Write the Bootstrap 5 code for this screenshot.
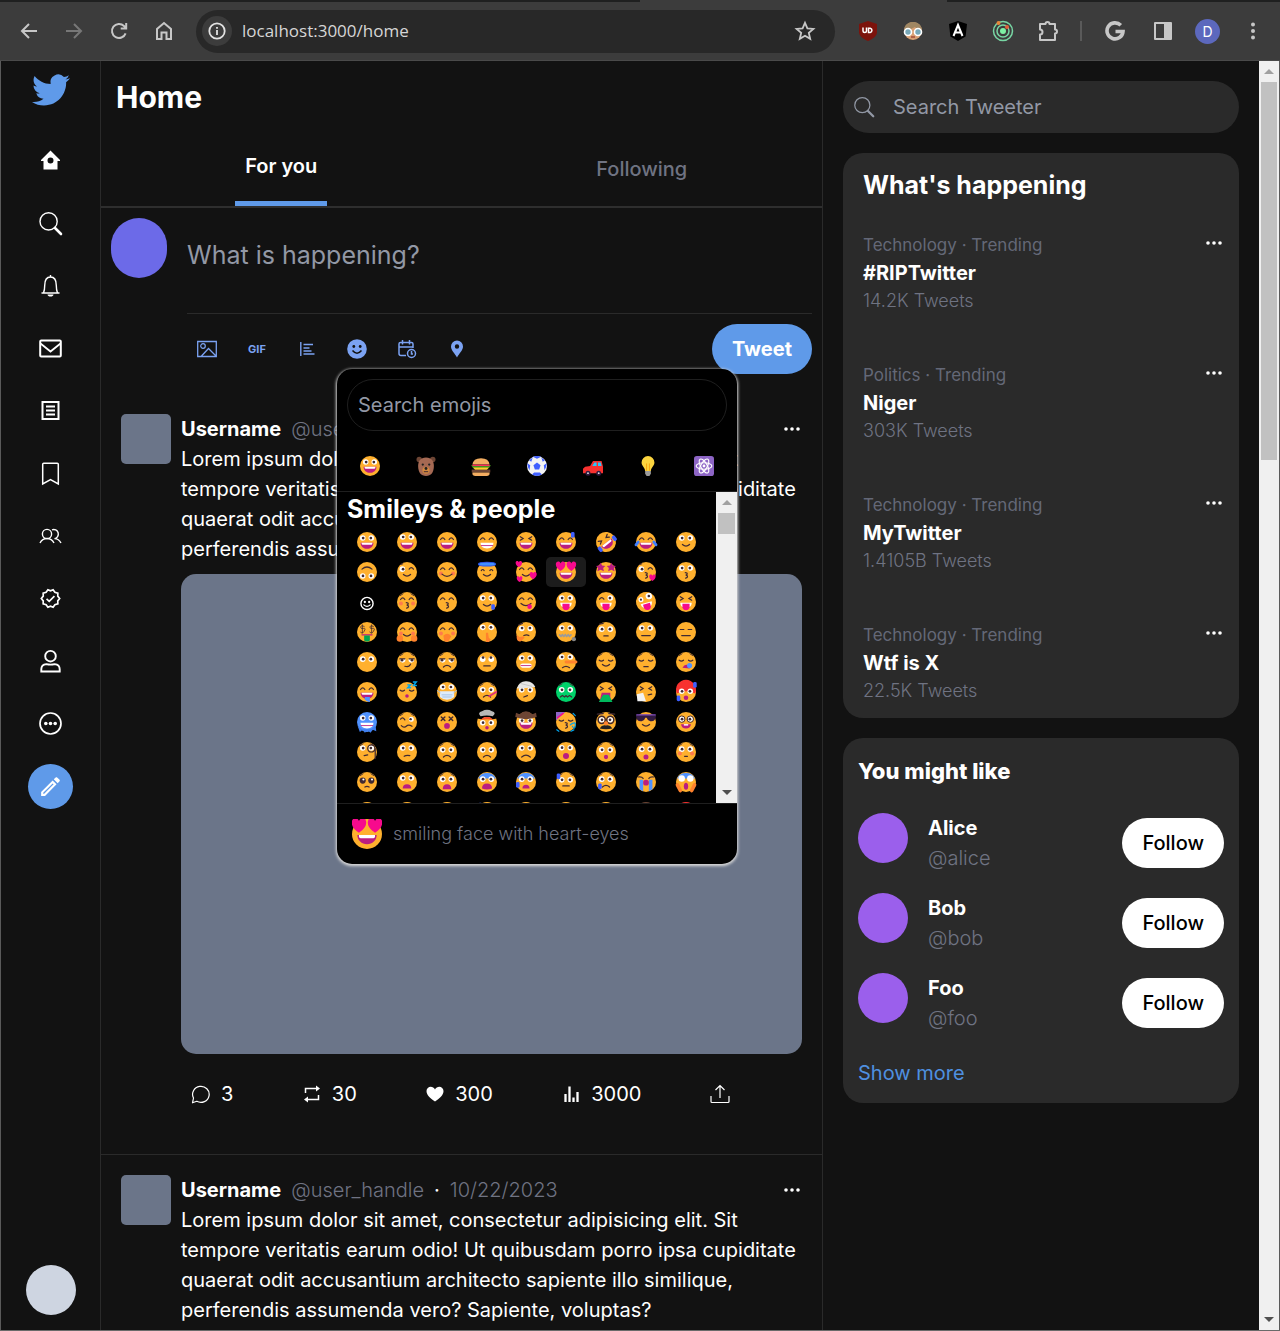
<!DOCTYPE html>
<html lang="en" data-bs-theme="dark">
<head>
<meta charset="utf-8">
<meta name="viewport" content="width=device-width, initial-scale=1">
<title>Home / Tweeter</title>
<link href="https://cdn.jsdelivr.net/npm/bootstrap@5.3.0/dist/css/bootstrap.min.css" rel="stylesheet">
<style>
  :root { --ink:#121212; --panel:#2a2a2a; --line:#2a2a2a; --blue:#5f9ae9; --soft:#7ba2f2; --dim:#6f7382; --hint:#9298a5; --slate:#6b7589; }
  body { font-family:Inter,"Liberation Sans",sans-serif; font-size:20px; line-height:30px; color:#fff; background:var(--ink); }
  button, input, textarea { font:inherit; }
  svg { display:block; flex:none; }
  .plain { background:none; border:0; padding:0; color:inherit; }
  .shell { height:100vh; overflow:hidden; border-bottom:1px solid #6a6a6a; }
  .work { min-height:0; border-right:1px solid #5a5a5a; }
  .ln { fill:none; stroke:currentColor; }

  /* browser bar */
  .tabstrip { flex:none; height:2px; background:#1f2020; }
  .tabstrip span { display:block; height:2px; width:24%; margin-left:50%; background:#3c3c3c; }
  .chrome { flex:none; height:59px; background:#3c3c3c; border-bottom:1px solid #4a4a4a; color:#c7c7c7; padding:0 5px 0 6px; }
  .chrome .tool { width:45px; height:45px; display:grid; place-items:center; }
  .chrome .apart { margin-right:3px; }
  .chrome .omni .star { width:46px; }
  .omni { height:43px; background:#282828; border-radius:22px; margin:0 10px; padding:0 7px 0 6px; }
  .omni .site { width:30px; height:30px; background:#3c3c3c; color:#e3e3e3; display:grid; place-items:center; }
  .omni input { font-family:"Open Sans",sans-serif; font-size:17px; color:#d6d6d6; background:none; border:0; outline:0; margin-left:10px; padding:0; min-width:0; }
  .rule { width:22px; } .rule::after { content:""; display:block; width:2px; height:20px; margin:auto; background:#5a5a5a; }
  .me { width:25px; height:25px; background:#5c68bd; color:#fff; font-size:14px; line-height:25px; text-align:center; }

  /* scroll bars */
  .sbar { flex:none; background:#f0f0f0; width:20px; padding:0 2px; color:#505050; }
  .sbar .cap { height:21px; display:grid; place-items:center; }
  .sbar .grip { background:#c1c1c1; }
  .sbar.page .grip { height:378px; }
  .sbar.menu { width:21px; }
  .sbar.menu .grip { height:21px; }

  .side { flex:0 0 101px; border-left:1px solid #5a5a5a; border-right:1px solid var(--line); padding:10px 0 15px; }
  .side ul { height:671px; margin:29px 0 0; }
  .side li > * { width:45px; height:45px; display:grid; place-items:center; color:#fff; }
  .side .pen { background:var(--blue); border-radius:50%; }
  .dot50 { width:50px; height:50px; flex:none; }
  .account { background:#ced5e1; }
  .feed { border-right:1px solid var(--line); min-width:0; }
  .aside { flex:0 0 436px; padding:20px; }
  .top { border-bottom:2px solid #2e2e2e; }
  .top h1 { font-size:30px; line-height:40px; height:70px; padding:16px 15px 0; }
  .tabs { height:75px; }
  .tabs a { color:var(--dim); text-decoration:none; font-weight:500; padding:20px 10px; }
  .tabs a.on { color:#fff; font-weight:600; border-bottom:5px solid var(--blue); }

  .write { padding:10px; gap:20px; margin-bottom:10px; }
  .write .who { width:56px; height:60px; border-radius:28px; background:#6c6ae8; flex:none; }
  .write textarea { display:block; height:96px; padding:20px 0; font-size:25px; line-height:35px; color:#fff; background:none; border:0; border-bottom:1px solid var(--line); outline:0; resize:none; }
  ::placeholder { color:var(--hint) !important; opacity:1; }
  .kit { margin-top:10px; gap:10px; }
  .kit .tool { width:40px; height:40px; display:grid; place-items:center; color:var(--soft); font-size:11px; font-weight:700; }
  .tweet-btn { height:50px; padding:0 20px; border-radius:25px; border:0; background:var(--blue); color:#fff; font-weight:700; }

  .post { padding:20px; gap:10px; border-bottom:1px solid var(--line); }
  .post .thumb { width:50px; height:50px; border-radius:5px; background:var(--slate); flex:none; }
  .post .shot { height:480px; border-radius:15px; background:var(--slate); margin:10px 0 20px; }
  .post .acts { width:90%; margin-bottom:20px; }
  .post .byline { gap:10px; }
  .acts button { height:40px; padding:0 10px; gap:10px; }
  .faint { color:var(--dim); font-weight:300; }
  .more { padding:5px 0; }

  .picker { left:0; top:100%; z-index:5; width:400px; background:#000; border-radius:15px; box-shadow:0 1px 3px 1px #d8d8d8; color:#fff; font-size:20px; font-weight:400; }
  .picker .find { display:block; width:380px; height:52px; margin:10px 10px 0; padding:0 10px; border:1px solid #1f1f1f; border-radius:26px; background:#000; outline:0; color:#fff; }
  .picker .cats { padding:15px 13px 5px; height:61px; border-bottom:1px solid #1f1f1f; }
  .cats button { width:40px; height:40px; display:grid; place-items:center; }
  .pane { height:311px; }
  .pane .well { overflow:hidden; padding:0 10px; }
  .well h2 { font-size:25px; line-height:35px; }
  .emo { display:grid; grid-template-columns:repeat(9,1fr); }
  .emo button { height:30px; display:grid; place-items:center; border-radius:5px; }
  .emo button.hot { background:#1c1c1c; }
  .emo svg, .cats svg { overflow:visible; }
  .tip { height:61px; border-top:1px solid #1f1f1f; padding:0 15px; gap:11px; font-size:18px; color:var(--dim); font-weight:300; }

  .panel { background:var(--panel); border-radius:20px; margin-top:20px; }
  .seek { background:var(--panel); height:52px; border-radius:26px; padding:0 10px; gap:18px; color:var(--hint); }
  .seek input { background:none; border:0; outline:0; padding:0; color:#fff; min-width:0; }
  .trends { padding:15px 15px 13px 20px; }
  .trends h2 { font-size:25px; line-height:35px; margin-bottom:28px; }
  .trends li + li { margin-top:46px; }
  .trends li { line-height:28px; }
  .trends button { padding-top:2px; }
  .topic { font-size:17px; color:#646877; }
  .count { font-size:18px; }
  .folks { padding:18px 15px 15px; }
  .folks h2 { font-size:22px; line-height:30px; margin-bottom:27px; font-weight:800; }
  .folks li { margin-bottom:20px; gap:20px; }
  .folks .face { background:#9b5fec; }
  .follow { height:50px; padding:0 20px; border-radius:25px; border:0; background:#fff; color:#000; font-weight:500; }
  .folks a { color:#4f90e0; text-decoration:none; font-weight:400; display:inline-block; margin-top:5px; }
</style>
</head>
<body>
<svg width="0" height="0" class="position-absolute" aria-hidden="true">
  <symbol id="dots" viewBox="0 0 20 20"><g fill="currentColor"><circle cx="4" cy="10" r="1.8"/><circle cx="10" cy="10" r="1.8"/><circle cx="16" cy="10" r="1.8"/></g></symbol>
  <symbol id="lens" viewBox="0 0 25 25"><circle class="ln" cx="10.6" cy="10.4" r="8.6" stroke-width="1.4"/><path class="ln" d="M17 17l6 6" stroke-width="2.6" stroke-linecap="round"/></symbol>
</svg>
<div class="shell d-flex flex-column">
  <div class="tabstrip"><span></span></div>
  <header class="chrome d-flex align-items-center">
    <button class="plain tool" aria-label="Back"><svg width="20" height="20"><path class="ln" d="M18 10H3M10 3l-7 7 7 7" stroke-width="2"/></svg></button>
    <button class="plain tool" aria-label="Forward"><svg width="20" height="20" color="#777"><path class="ln" d="M2 10h15M10 3l7 7-7 7" stroke-width="2"/></svg></button>
    <button class="plain tool" aria-label="Reload"><svg width="20" height="20"><path class="ln" d="M16.6 12.3A7 7 0 1 1 15 5l2 2M17.2 2v5.5h-5.5" stroke-width="2"/></svg></button>
    <button class="plain tool" aria-label="Home page"><svg width="20" height="20"><path class="ln" d="M3 18V8l7-6 7 6v10h-4.500v-6.500h-5V18z" stroke-width="2"/></svg></button>
    <div class="omni d-flex align-items-center flex-grow-1">
      <button class="plain site rounded-circle" aria-label="Site information"><svg width="18" height="18"><circle class="ln" cx="9" cy="9" r="7.7" stroke-width="1.8"/><path d="M9 8v5M9 5v1.8" class="ln" stroke-width="1.8"/></svg></button>
      <input class="flex-grow-1" aria-label="Address" value="localhost:3000/home">
      <button class="plain tool star" aria-label="Bookmark"><svg width="22" height="22"><path class="ln" d="M11 2.800l2.400 5.600 6 .500-4.600 4 1.400 5.900-5.200-3.100-5.200 3.100 1.400-5.900-4.600-4 6-.500z" stroke-width="1.8"/></svg></button>
    </div>
    <button class="plain tool" aria-label="uBlock Origin"><svg width="20" height="22"><path d="M10 1l9 3v8c0 4-4 7-9 9-5-2-9-5-9-9V4z" fill="#7c130c"/><path d="M5 7.500v3.500c0 2 3.500 2 3.500 0V7.500M10.500 8.200v4.300h1.700a2.200 2.200 0 0 0 0-4.300z" fill="none" stroke="#fff" stroke-width="1.5"/></svg></button>
    <button class="plain tool" aria-label="Glasses extension"><svg width="22" height="22"><circle cx="11" cy="11" r="9" fill="#d9a074"/><path d="M2 11C2 4 7 2 11 2s9 2 9 9h-3l-4-4-6 3-2 2z" fill="#a08763"/><circle cx="6" cy="12" r="3.5" fill="#78a8b8" stroke="#fff" stroke-width="1.6"/><circle cx="16" cy="12" r="3.5" fill="#78a8b8" stroke="#fff" stroke-width="1.6"/><path d="M9 17h4" stroke="#a34c38" stroke-width="1.5"/></svg></button>
    <button class="plain tool" aria-label="Angular DevTools"><svg width="20" height="22"><path d="M10 1l9 3-1.400 12.500L10 21l-7.600-4.500L1 4z" fill="#000"/><path d="M5.500 16L10 5l4.500 11M7 12.500h6" fill="none" stroke="#fff" stroke-width="2"/></svg></button>
    <button class="plain tool" aria-label="Orbit extension"><svg width="22" height="22"><g fill="none" stroke="#78d6a4" stroke-width="1.5"><circle cx="11" cy="11" r="9.5"/><circle cx="11" cy="11" r="6"/></g><circle cx="11" cy="11" r="3" fill="#7ef0a4"/><circle cx="6.500" cy="3" r="2" fill="#e8863a"/><circle cx="15" cy="7" r="2" fill="#e0603a"/></svg></button>
    <button class="plain tool" aria-label="Extensions"><svg width="22" height="22"><path class="ln" d="M3 4h5.500a2 2 0 0 1 4 0H18v5.500a2 2 0 0 1 0 4V20H3v-5.500a2.500 2.500 0 0 0 0-5z" stroke-width="2" stroke-linejoin="round"/></svg></button>
    <span class="rule"></span>
    <button class="plain tool apart" aria-label="Google"><svg width="20" height="20"><path class="ln" d="M15.800 4.300A8 8 0 1 0 18 10.500H10.500" stroke-width="3.6"/></svg></button>
    <button class="plain tool" aria-label="Side panel"><svg width="20" height="20"><path class="ln" d="M2 2h16v16H2z" stroke-width="2" stroke-linejoin="round"/><path fill="currentColor" d="M11 2h7v16h-7z"/></svg></button>
    <button class="plain tool" aria-label="Profile"><span class="me rounded-circle">D</span></button>
    <button class="plain tool" aria-label="Menu"><svg width="20" height="20"><g fill="currentColor"><circle cx="10" cy="3.500" r="2"/><circle cx="10" cy="10" r="2"/><circle cx="10" cy="16.500" r="2"/></g></svg></button>
  </header>

  <div class="work d-flex flex-grow-1">
    <nav class="side d-flex flex-column align-items-center" aria-label="Main">
      <a href="#" aria-label="Tweeter"><svg width="38" height="38" viewBox="0 0 24 24" fill="#5f9ae9"><path d="M23.953 4.570a10 10 0 01-2.825.775 4.958 4.958 0 002.163-2.723c-.951.555-2.005.959-3.127 1.184a4.920 4.920 0 00-8.384 4.482C7.690 8.095 4.067 6.130 1.640 3.162a4.822 4.822 0 00-.666 2.475c0 1.710.870 3.213 2.188 4.096a4.904 4.904 0 01-2.228-.616v.060a4.923 4.923 0 003.946 4.827 4.996 4.996 0 01-2.212.085 4.936 4.936 0 004.604 3.417 9.867 9.867 0 01-6.102 2.105c-.390 0-.779-.023-1.170-.067a13.995 13.995 0 007.557 2.209c9.053 0 13.998-7.496 13.998-13.985 0-.210 0-.420-.015-.630A9.935 9.935 0 0024 4.590z"/></svg></a>
      <ul class="list-unstyled d-flex flex-column justify-content-between">
        <li><a href="#" aria-label="Home"><svg width="25" height="25"><path fill="currentColor" fill-rule="evenodd" d="M12.500 2.500L22 12v1h-2.500v8.500h-14V13H3v-1zM12.500 9.500a3 3 0 1 0 0 6 3 3 0 0 0 0-6z"/></svg></a></li>
        <li><a href="#" aria-label="Explore"><svg width="25" height="25"><use href="#lens"/></svg></a></li>
        <li><a href="#" aria-label="Notifications"><svg width="25" height="25"><path class="ln" d="M3.500 20h18M5.500 20c.800-2 1.200-3.500 1.200-7.500C6.700 7 8.800 4 12.500 4s5.800 3 5.800 8.500c0 4 .400 5.500 1.200 7.500M12.500 4V2" stroke-width="1.4"/><path fill="currentColor" d="M9.500 21.500h6c-.300 1.600-1.200 2-3 2s-2.700-.400-3-2z"/></svg></a></li>
        <li><a href="#" aria-label="Messages"><svg width="25" height="25"><rect class="ln" x="2.200" y="4.500" width="20.600" height="16" rx="1" stroke-width="2"/><path class="ln" d="M2.500 7.500l10 8 10-8" stroke-width="1.8"/></svg></a></li>
        <li><a href="#" aria-label="Lists"><svg width="25" height="25"><path class="ln" d="M4.500 4h16v17h-16zM8 8.500h9M8 12.500h9M8 16.500h9" stroke-width="2"/></svg></a></li>
        <li><a href="#" aria-label="Bookmarks"><svg width="25" height="25"><path class="ln" d="M4.700 23V3.200q0-1 1-1h13.600q1 0 1 1V23l-7.800-4.500z" stroke-width="1.5"/></svg></a></li>
        <li><a href="#" aria-label="Communities"><svg width="25" height="25"><g class="ln" stroke-width="1.4"><circle cx="9" cy="10" r="4.6"/><path d="M2 19c1.500-3 4-4.500 7-4.500s5.500 1.500 7 4.500M14 5.800a4.600 4.600 0 1 1 2.500 8.800c3 0 5 1.500 6.500 4.400"/></g></svg></a></li>
        <li><a href="#" aria-label="Verified"><svg width="21" height="21" viewBox="0 0 24 24"><path class="ln" stroke-width="1.9" d="M22.500 12l-2.200-2.700.1-3.500-3.400-.9L15 2l-3 1.300L9 2 7 4.900l-3.400.9.100 3.500L1.500 12l2.200 2.700-.1 3.500 3.400.9L9 22l3-1.300 3 1.300 2-2.900 3.400-.9-.1-3.500zM7.500 12.500l3 2.800 6-6"/></svg></a></li>
        <li><a href="#" aria-label="Profile"><svg width="25" height="25"><g class="ln" stroke-width="1.9"><circle cx="12.500" cy="7.200" r="5.3"/><path d="M3.300 22.500v-2.200q0-4.800 5-5.200c2 .500 6.400.500 8.400 0q5 .400 5 5.200v2.200z"/></g></svg></a></li>
        <li><a href="#" aria-label="More"><svg width="25" height="25"><circle class="ln" cx="12.500" cy="12.500" r="10.5" stroke-width="1.7"/><g fill="currentColor"><circle cx="7.800" cy="12.500" r="1.8"/><circle cx="12.500" cy="12.500" r="1.8"/><circle cx="17.200" cy="12.500" r="1.8"/></g></svg></a></li>
        <li><button class="plain pen" aria-label="Write a tweet"><svg width="25" height="25" viewBox="0 0 24 24" fill="#fff"><path d="M14.060 9.020l.920.920L5.920 19H5v-.920l9.060-9.060M17.660 3c-.250 0-.510.100-.700.290l-1.830 1.830 3.750 3.750 1.830-1.830c.390-.390.390-1.020 0-1.410l-2.340-2.340c-.200-.200-.450-.290-.710-.290zm-3.600 3.190L3 17.250V21h3.750L17.810 9.940l-3.750-3.750z"/></svg></button></li>
      </ul>
      <button class="plain dot50 account rounded-circle mt-auto" aria-label="Account"></button>
    </nav>

    <main class="feed flex-grow-1">
      <header class="top">
        <h1 class="fw-bold m-0">Home</h1>
        <nav class="tabs row g-0" aria-label="Timelines">
          <div class="col d-flex justify-content-center align-items-center"><a class="on" href="#">For you</a></div>
          <div class="col d-flex justify-content-center align-items-center"><a href="#">Following</a></div>
        </nav>
      </header>

      <section class="write d-flex">
        <div class="who"></div>
        <div class="flex-grow-1">
          <textarea class="w-100" aria-label="Tweet text" placeholder="What is happening?"></textarea>
          <div class="kit d-flex align-items-center">
            <button class="plain tool" aria-label="Add image"><svg width="20" height="20"><path class="ln" d="M.700 2.500h18.600v15H.700zM4.500 17l7-7.500 7.500 7.500" stroke-width="1.3"/><circle class="ln" cx="6" cy="7" r="2.3" stroke-width="1.2"/></svg></button>
            <button class="plain tool">GIF</button>
            <button class="plain tool" aria-label="Add poll"><svg width="20" height="20"><path class="ln" d="M3.800 3v14M6.500 5.500h9.500M6.500 9h6M6.500 12h8M6.500 15h11" stroke-width="1.4"/></svg></button>
            <div class="position-relative">
              <button class="plain tool" aria-label="Add emoji"><svg width="20" height="20"><circle cx="10" cy="10" r="9.8" fill="currentColor"/><g fill="#121212"><circle cx="6.800" cy="7.500" r="1.4"/><circle cx="13.200" cy="7.500" r="1.4"/></g><path d="M5.500 11.500q4.500 5.500 9 0" fill="none" stroke="#121212" stroke-width="1.5"/></svg></button>
              <div class="picker position-absolute">
                <input class="find" type="search" aria-label="Search emojis" placeholder="Search emojis">
                <div class="cats d-flex justify-content-between" id="cats"></div>
                <div class="pane d-flex">
                  <div class="well flex-grow-1">
                    <h2 class="fw-bold m-0">Smileys &amp; people</h2>
                    <div class="emo" id="emo"></div>
                  </div>
                  <div class="sbar menu d-flex flex-column" aria-hidden="true">
                    <span class="cap"><svg width="10" height="5" fill="#a0a0a0"><path d="M0 5l5-5 5 5z"/></svg></span><span class="grip"></span>
                    <span class="cap mt-auto"><svg width="10" height="5" fill="currentColor"><path d="M0 0l5 5 5-5z"/></svg></span>
                  </div>
                </div>
                <div class="tip d-flex align-items-center"><span id="big"></span>smiling face with heart-eyes</div>
              </div>
            </div>
            <button class="plain tool" aria-label="Schedule"><svg width="20" height="20"><g class="ln" stroke-width="1.5"><path d="M9 16.500H4q-2 0-2-2V5q0-1.500 1.500-1.500h11Q16 3.500 16 5v4M2 8h14M5.500 1v4.500M12.500 1v4.500"/><circle cx="14.500" cy="14.500" r="4"/><path d="M14.500 12v3H16"/></g></svg></button>
            <button class="plain tool" aria-label="Location"><svg width="20" height="20"><path fill="currentColor" fill-rule="evenodd" d="M10 1.500a6 6 0 0 0-6 6c0 4 4 7 6 11 2-4 6-7 6-11a6 6 0 0 0-6-6zM10 5.300a2.200 2.200 0 1 1 0 4.400 2.200 2.200 0 0 1 0-4.400z"/></svg></button>
            <button class="tweet-btn ms-auto">Tweet</button>
          </div>
        </div>
      </section>

      <div id="posts"></div>
    </main>

    <aside class="aside">
      <label class="seek d-flex align-items-center"><svg width="22" height="22"><use href="#lens"/></svg><input class="flex-grow-1" type="search" aria-label="Search Tweeter" placeholder="Search Tweeter"></label>
      <section class="panel trends">
        <h2 class="fw-bold">What's happening</h2>
        <ul class="list-unstyled m-0" id="trends"></ul>
      </section>
      <section class="panel folks">
        <h2>You might like</h2>
        <ul class="list-unstyled m-0" id="folks"></ul>
        <a href="#">Show more</a>
      </section>
    </aside>
    <div class="sbar page d-flex flex-column" aria-hidden="true">
      <span class="cap"><svg width="10" height="5" fill="#a0a0a0"><path d="M0 5l5-5 5 5z"/></svg></span><span class="grip"></span>
      <span class="cap mt-auto"><svg width="10" height="5" fill="currentColor"><path d="M0 0l5 5 5-5z"/></svg></span>
    </div>
  </div>
</div>

<script>
// Emoji faces are built from a few shared parts on a 32 unit grid.
const c = (x, y, r, f) => `<circle cx="${x}" cy="${y}" r="${r}" fill="${f}"/>`;
const p = (d, f) => `<path d="${d}" fill="${f}"/>`;
const s = (d, w = 1.7, col = '#402a32') => `<path d="${d}" fill="none" stroke="${col}" stroke-width="${w}" stroke-linecap="round"/>`;
const heart = (x, y, k) => `<path transform="translate(${x} ${y}) scale(${k})" fill="#f70a8d" d="M0 5C-3 3-5 1-5-2c0-3.500 4-4 5-1 1-3 5-2.500 5 1 0 3-2 5-5 7z"/>`;
const face = (f = '#ffb02e') => c(16, 16, 14, f);
const F = face();
const eyes = (dx = .6, dy = 0, y = 10.5) => c(10, y, 3.9, '#fff') + c(22, y, 3.9, '#fff') + c(10 + dx, y + dy, 1.9, '#402a32') + c(22 - dx, y + dy, 1.9, '#402a32');
const lowEyes = eyes(.4, 0, 13);
const happy = s('M7 12.500q3-4.500 6 0M19 12.500q3-4.500 6 0');
const shut = s('M6.500 13.500q3 2.500 6 0M19.500 13.500q3 2.500 6 0');
const squint = s('M8 8.500l4 2.500-4 2.500M24 8.500L20 11l4 2.500');
const wink = c(9.5, 12, 3.9, '#fff') + c(10.5, 12, 1.9, '#402a32') + s('M19 12q3-4 6 0M7 5.500l3-1');
const grin = p('M7 17h18c0 5-4 8.500-9 8.500S7 22 7 17z', '#bb1d80') + p('M8.500 17h15v1q0 2-1.500 2h-12q-1.500 0-1.500-2z', '#fff');
const smile = s('M11 19.500q5 4.500 10 0'), frown = s('M11 23q5-4.500 10 0'), flat = s('M11.500 21.500h9');
const teeth = p('M7 17h18c0 5-3 8-9 8s-9-3-9-8z', '#fff') + s('M8 21h16', 1.2, '#bb1d80');
const kiss = s('M15 17c4 0 3 3 .5 3.500 3.500 0 3.500 3.500 0 4');
const blush = c(7.5, 18, 2.8, '#ff7a4d') + c(24.5, 18, 2.8, '#ff7a4d');
const tongue = p('M8 17h16c0 2-1 5-3 6H11c-2-1-3-4-3-6z', '#fff') + p('M11 18.500h10v5q-1 4-5 4t-5-4z', '#f70a8d');
const brows = s('M6.500 7l4-2.500M25.500 7l-4-2.500', 1.3);
const o = (r = 3) => c(16, 21.5, r, '#bb1d80');
const drop = (x, y, col = '#3f5fff') => `<rect x="${x}" y="${y}" width="5" height="8" rx="2" fill="${col}"/>`;
const hand = p('M11 21q4-4 8-2l3 3-4 7q-4 2-6-1z', '#ff822d');
const blueTop = p('M3.500 11a14 14 0 0 1 25 0z', '#5092ff');
const turn = (a, g) => `<g transform="rotate(${a} 16 16)">${g}</g>`;
const star = x => p(`M${x} 3l2 4 4.500.5-3 3 1 4.500-4.500-2.200-4.500 2.200 1-4.500-3-3L${x - 2} 7z`, '#bb1d80');
const love = F + heart(8.5, 8, 1.35) + heart(23.5, 8, 1.35) + grin;

const faces = [
  ['grinning', F + eyes() + grin], ['big eyes', F + eyes(.6, 0, 9) + grin], ['smiling eyes', F + happy + grin], ['beaming', F + happy + teeth], ['squinting', F + squint + grin],
  ['sweat', F + happy + grin + drop(23, 2)], ['rolling', turn(-38, F + squint + grin + drop(1, 15) + drop(26, 15))], ['joy', F + happy + grin + s('M5 16l-3 4M27 16l3 4', 4, '#3f7fff')], ['slight smile', F + eyes() + smile],
  ['upside down', turn(180, F + eyes(.4) + s('M9 20q7 6 14 0'))], ['winking', F + wink + smile], ['blushing', F + happy + blush + s('M9 19q7 6 14 0')], ['halo', F + '<ellipse cx="16" cy="5" rx="12" ry="2.6" fill="#3f8fff" stroke="#2a55ee" stroke-width="1.5"/>' + s('M8 14q2-3 4 0M20 14q2-3 4 0') + smile], ['hearts', F + happy + smile + heart(6, 5, .9) + heart(26, 21, 1) + heart(7, 26, .8)],
  ['heart eyes', love], ['star struck', F + star(8.5) + star(23.5) + grin], ['blowing a kiss', F + wink + kiss + heart(25, 24, .9)], ['kissing', F + eyes() + kiss],
  ['relaxed', '<circle cx="16" cy="18" r="8.5" fill="none" stroke="#fff" stroke-width="2"/>' + c(13, 16, 1.6, '#fff') + c(19, 16, 1.6, '#fff') + s('M11.500 20q4.500 4 9 0', 1.7, '#fff')], ['closed kiss', F + happy + blush + kiss + brows], ['smiling kiss', F + happy + kiss], ['tear', F + eyes() + smile + drop(22, 19)], ['yum', F + happy + s('M9 18q7 6 14 0') + c(21, 22.5, 3.2, '#f70a8d')],
  ['tongue', F + eyes() + tongue], ['wink tongue', F + s('M7 12q3-4 6 0') + c(22, 10.5, 3.9, '#fff') + c(21.5, 10.5, 1.9, '#402a32') + tongue], ['zany', turn(-15, F + c(10, 11, 3.5, '#fff') + c(22, 9, 4.5, '#fff') + c(10, 11, 1.5, '#402a32') + c(22, 9, 1.8, '#402a32') + tongue)], ['squint tongue', F + squint + tongue],
  ['money', F + s('M12 8q-5-2-5 1t4 2 1 4-5 1M9.500 6v11M25 8q-5-2-5 1t4 2 1 4-5 1M22.500 6v11', 1.1) + s('M9 20h14', 2, '#bb1d80') + p('M12 21h8v7q-4 3-8 0z', '#00a650')], ['hugging', F + happy + smile + blush + c(6, 25, 4.5, '#ff822d') + c(26, 25, 4.5, '#ff822d')], ['giggle', F + happy + blush + hand], ['shush', F + eyes(.5, 0, 9.5) + p('M14.500 17h3l1 7 3 3-3 3h-4z', '#ff822d')], ['thinking', F + eyes(.5, -.5, 11) + s('M6 6l5-2M13 21q4-2 7 0') + p('M3 20l4 3 6-1 1 2-5 5q-7 2-6-9z', '#ff822d')],
  ['zipper', F + eyes() + s('M7 20l2 2 2-2 2 2 2-2 2 2 2-2 2 2 2-2', 2.5, '#9b9b9b') + c(27, 26, 3, '#888')], ['raised brow', F + eyes(.5, 0, 12) + s('M7 5l5-1') + s('M13 21.500h6')], ['neutral', F + eyes() + s('M10 21h12')], ['blank', F + s('M8 12.500h5M19 12.500h5') + s('M10 21h12')],
  ['no mouth', F + eyes(.6, 0, 12)], ['smirk', F + eyes(-1, .5, 13) + p('M5 8h22v4H5z', '#ffb02e') + s('M6 11.500h7M19 11.500h7M13 22q6 2 8-3') + brows], ['unamused', F + eyes(-1, .5, 13) + p('M5 8h22v4H5z', '#ffb02e') + s('M6 11.500h7M19 11.500h7') + frown + brows], ['rolling eyes', F + eyes(.5, -2.2, 12) + flat], ['grimace', F + eyes() + '<rect x="8" y="18" width="16" height="6" rx="3" fill="#fff"/>' + s('M9 21h14', 1.2, '#bb1d80')],
  ['lying', F + eyes(.5, 0, 9) + s('M11 24q5-4 10 0') + s('M16 16h14', 4, '#ff822d')], ['relieved', F + shut + smile + brows], ['pensive', F + shut + s('M13 22.500h6') + brows], ['sleepy', F + shut + brows + p('M11 24q4-7 10-2v3z', '#bb1d80') + c(21, 21, 3.6, '#5092ff')],
  ['drooling', F + happy + grin + p('M13 23h7v7q-4 1-7-4z', '#5092ff')], ['sleeping', F + shut + o(2.5) + s('M17 6h4l-4 4h4M25 2h4l-4 5h4', 2, '#00a6ed')], ['mask', F + eyes(.5, 0, 9) + p('M6 15h20v8q-10 8-20 0z', '#e0ecf8') + s('M2.500 14l4 3M29.500 14l-4 3M9 20h14M10 23h12', 1.3, '#9fc0e6')], ['fever', F + lowEyes + brows + frown + s('M19 22l10-6', 2.4, '#e0307a')], ['bandage', F + lowEyes + s('M13 23l5-2') + p('M3 11Q7 0 17 1q9 1 12 8-12 2-26 2z', '#e6e6e6') + s('M8 4l16 4', 1, '#bbb')],
  ['nauseated', face('#00d26a') + lowEyes + brows + s('M8 23l3-2 3 2 2-2 2 2 3-2 3 2')], ['vomiting', F + squint + p('M10 17h12v13H7z', '#bb1d80') + p('M12 20h8l5 10H6z', '#00b85c')], ['sneezing', F + squint + s('M19 20l5-1') + p('M3 19l9-2 4 12H4z', '#f2f2f2')], ['hot', F + p('M3 18a14 14 0 1 1 26 0q-13-6-26 0z', '#f8312f') + eyes(.5, 0, 15) + c(16, 24, 3.2, '#bb1d80') + drop(3, 21) + drop(26, 2)],
  ['cold', face('#5092ff') + eyes() + teeth + p('M3 22l3 8 4-3 3 4 4-3 4 3 3-4 5 2-1-8-6 5H9z', '#3f7fef')], ['woozy', F + s('M7 12q3-4 6 1') + c(22, 12, 3.5, '#fff') + c(21, 12, 1.7, '#402a32') + s('M8 21q4 4 7 1t8 0') + brows], ['dizzy', F + s('M8 9l5 5M13 9l-5 5M19 9l5 5M24 9l-5 5', 2) + o(4)], ['exploding', F + p('M2 11L6 0h20l4 11-6 1-8-3-8 3z', '#000') + p('M7 8q-5-5 2-7 7-4 14 0 7 2 1 7-8-2-17 0z', '#b8b8b8') + p('M7 13l5-4h8l5 4-9-1z', '#f8512f') + eyes(.5, 0, 17) + c(16, 24, 2.5, '#bb1d80')], ['cowboy', F + eyes(.5, 0, 14) + grin + p('M1 9l1-6 5 2q9-8 18 0l5-2 1 6q-15 6-30 0z', '#6d4534')],
  ['party', F + shut + kiss + p('M2 14V2h13z', '#8d65c5') + s('M4 10l8-6', 2, '#f70a8d') + s('M22 20q8-6 7 1t-4 1M26 4l3 3M3 27l3 2M23 29l4-2', 1.7, '#00a6ed')], ['disguised', F + lowEyes + s('M5 13a5 5 0 1 0 10 0 5 5 0 1 0-10 0M17 13a5 5 0 1 0 10 0 5 5 0 1 0-10 0M4 5l8-1M28 5l-8-1', 2) + c(16, 18, 3, '#ff822d') + p('M7 25q4-6 9-4 5-2 9 4-9 2-18 0z', '#222')], ['cool', F + p('M2 6h28v2q-1 8-8 7-4-1-5-5h-2q-1 4-5 5-7 1-8-7z', '#321b41') + s('M3 6h26', 1.5, '#7d4bbb') + smile], ['nerd', F + eyes(.5, 0, 12) + s('M5.500 12a4.500 4.500 0 1 0 9 0 4.500 4.500 0 1 0-9 0M17.500 12a4.500 4.500 0 1 0 9 0 4.500 4.500 0 1 0-9 0', 1.3) + p('M9 19h14q-1 6-7 6t-7-6z', '#bb1d80') + p('M13 19h6v2h-6z', '#fff')],
  ['monocle', F + eyes() + s('M17 11a5 5 0 1 0 10 0 5 5 0 1 0-10 0M27.500 11v14M12 21l5-1') + brows], ['confused', F + eyes() + s('M12 22q3-2 8-1')], ['worried', F + eyes(.5, 0, 13) + brows + frown], ['slight frown', F + eyes(.5, 0, 13) + frown], ['frowning', F + eyes() + s('M10 23q6-5 12 0')],
  ['open mouth', F + eyes(.5, 0, 10) + o(4.2)], ['hushed', F + eyes(.5, 0, 13) + c(16, 23, 3, '#bb1d80') + brows], ['astonished', F + eyes(.5, 0, 12) + brows + c(16, 23, 3.5, '#bb1d80')], ['flushed', F + eyes(.5, 0, 12) + blush + s('M14 22h4') + brows],
  ['pleading', F + c(10, 14, 4.3, '#402a32') + c(22, 14, 4.3, '#402a32') + c(11, 12.5, 1.5, '#fff') + c(23, 12.5, 1.5, '#fff') + s('M13 23q3-2 6 0') + brows], ['frown open', F + eyes() + p('M10 25q0-6 6-6t6 6z', '#bb1d80')], ['anguished', F + eyes(.5, 0, 12) + brows + p('M10 26q0-7 6-7t6 7z', '#bb1d80')], ['fearful', F + blueTop + eyes(.5, 0, 12) + p('M9 25q0-7 7-7t7 7q-7 3-14 0z', '#bb1d80')], ['anxious', F + blueTop + eyes(.5, 0, 12) + p('M11 25q0-5 5-5t5 5z', '#bb1d80') + drop(2, 16)],
  ['relieved sweat', F + eyes(.5, 0, 13) + flat + brows + drop(3, 4)], ['crying', F + eyes(.5, 0, 12) + frown + brows + drop(5, 18)], ['sobbing', F + s('M5 9q5-1 7 2M27 9q-5-1-7 2') + p('M7 13h5v16l-5-3zM20 13h5v13l-5 3z', '#5092ff') + c(16, 17, 4, '#bb1d80')], ['screaming', F + blueTop + c(10, 11, 4.5, '#fff') + c(22, 11, 4.5, '#fff') + '<ellipse cx="16" cy="22" rx="3" ry="5" fill="#bb1d80"/>' + s('M4 20l4 8M28 20l-4 8', 5, '#ff822d')],
  ['persevering', F + squint + frown], ['disappointed', F + shut + frown], ['downcast', F + shut + frown], ['weary', F + drop(4, 3) + shut + o()], ['tired', F + squint + o()], ['yawning', F + squint + o(4)], ['steam', F + lowEyes + flat], ['angry', face('#6d4534') + lowEyes + flat], ['enraged', face('#f8312f') + lowEyes + frown]
];
const pic = (g, n = 20) => `<svg width="${n}" height="${n}" viewBox="2 2 28 28">${g}</svg>`;
const fill = (id, html) => { document.getElementById(id).innerHTML = html; };
fill('emo', faces.map(([n, g]) => `<button class="plain ${n === 'heart eyes' ? 'hot' : ''}" aria-label="${n}">${pic(g)}</button>`).join(''));
fill('big', pic(love, 30));

const groups = [
  ['Smileys', faces[0][1]],
  ['Animals', c(6.5, 7, 3.8, '#6d4534') + c(25.5, 7, 3.8, '#6d4534') + p('M16 4c8 0 11 5 11 12 0 9-4 14-11 14S5 25 5 16C5 9 8 4 16 4z', '#a56953') + c(11.5, 14, 1.6, '#212121') + c(20.5, 14, 1.6, '#212121') + c(16, 22, 5, '#d3883e') + c(16, 19.5, 2, '#212121') + s('M13.500 24h5', 1.4)],
  ['Food', p('M4 14q1-9 12-9t12 9z', '#f3ad61') + p('M2 15h28l-3 4H5z', '#44911b') + p('M4 14h24v2H4z', '#f92f60') + p('M5 18h22l-3 4H8z', '#ffce2e') + p('M3 21h26v4H3z', '#6d4534') + p('M4 25h24v2q0 3-4 3H8q-4 0-4-3z', '#f3ad61')],
  ['Activities', c(16, 16, 14, '#f4f4f4') + p('M16 11l5 4-2 6h-6l-2-6zM10 3l6 3 6-3q-6-2-12 0zM2.500 12l4 3-1 7q-3-4-3-10zM29.500 12l-4 3 1 7q3-4 3-10zM9 28l3-3h8l3 3q-7 4-14 0zM5 8l5-4-2 6zM27 8l-5-4 2 6z', '#3f5fff')],
  ['Travel', p('M2 20l3-3 7-1 4-7h12l2 8v9H2z', '#f8312f') + p('M15 16l3-5h3v5zM23 11h4l1 5h-5z', '#26c9fc') + c(9, 26, 3.5, '#321b41') + c(24, 26, 3.5, '#321b41') + c(9, 26, 1.3, '#ddd') + c(24, 26, 1.3, '#ddd')],
  ['Objects', p('M16 2a9 9 0 0 1 9 9c0 5-5 7-5 12h-8c0-5-5-7-5-12a9 9 0 0 1 9-9z', '#fcd53f') + s('M14 13v9M18 13v9', 1.3, '#f59f0a') + p('M12 23h8v4l-2 3h-4l-2-3z', '#9b9b9b')],
  ['Symbols', '<rect x="2" y="2" width="28" height="28" rx="4" fill="#8d65c5"/><g fill="none" stroke="#fff" stroke-width="1.6"><ellipse cx="16" cy="16" rx="11" ry="4.5"/><ellipse cx="16" cy="16" rx="11" ry="4.5" transform="rotate(60 16 16)"/><ellipse cx="16" cy="16" rx="11" ry="4.5" transform="rotate(120 16 16)"/></g>' + c(16, 16, 2, '#fff')]
];
fill('cats', groups.map(([n, g]) => `<button class="plain" aria-label="${n}">${pic(g)}</button>`).join(''));

const dots = '<svg width="20" height="20"><use href="#dots"/></svg>';
const acts = [
  ['Reply', '3', '<path class="ln" d="M1.500 18.800l1-4.800a8.300 8 0 1 1 3.300 3.300z" stroke-width="1.2" stroke-linejoin="round"/>'],
  ['Retweet', '30', '<path class="ln" d="M3.500 9V4.500H15M16.500 11v4.500H5" stroke-width="1.5"/><path fill="currentColor" d="M14 1.500l4 3-4 3zM6 12.500l-4 3 4 3z"/>'],
  ['Like', '300', '<path fill="currentColor" d="M10 17.500C5 14 1.500 11 1.500 7c0-5 6.500-6 8.500-1.500C12 1 18.500 2 18.500 7c0 4-3.500 7-8.500 10.500z"/>'],
  ['Views', '3000', '<path class="ln" d="M4.500 18v-8M8.500 18V2.500M12.500 18v-4.500M16.500 18V8" stroke-width="2.3"/>'],
  ['Share', '', '<path class="ln" d="M10 14V1.500M5.500 6L10 1.500 14.500 6M1 12v5.500q0 1 1 1h16q1 0 1-1V12" stroke-width="1.2"/>']
];
const post = `<article class="post d-flex">
  <div class="thumb"></div>
  <div class="flex-grow-1">
    <div class="byline d-flex align-items-center">
      <strong class="fw-bold">Username</strong><span class="faint">@user_handle</span><span>·</span><span class="faint">10/22/2023</span>
      <button class="plain more ms-auto" aria-label="More">${dots}</button>
    </div>
    <p class="m-0">Lorem ipsum dolor sit amet, consectetur adipisicing elit. Sit tempore veritatis earum odio! Ut quibusdam porro ipsa cupiditate quaerat odit accusantium architecto sapiente illo similique, perferendis assumenda vero? Sapiente, voluptas?</p>
    <div class="shot"></div>
    <div class="acts d-flex justify-content-between">${acts.map(([n, t, g]) => `<button class="plain d-flex align-items-center" aria-label="${n} ${t}"><svg width="20" height="20">${g}</svg>${t}</button>`).join('')}</div>
  </div>
</article>`;
fill('posts', post + post);

fill('trends', [['Technology', '#RIPTwitter', '14.2K'], ['Politics', 'Niger', '303K'], ['Technology', 'MyTwitter', '1.4105B'], ['Technology', 'Wtf is X', '22.5K']]
  .map(([k, t, n]) => `<li class="d-flex justify-content-between align-items-start"><div><span class="topic d-block">${k} · Trending</span><strong class="fw-bold d-block">${t}</strong><span class="faint count d-block">${n} Tweets</span></div><button class="plain" aria-label="More">${dots}</button></li>`).join(''));
fill('folks', [['Alice', '@alice'], ['Bob', '@bob'], ['Foo', '@foo']]
  .map(([n, h]) => `<li class="d-flex"><div class="face dot50 rounded-circle"></div><div class="flex-grow-1"><strong class="fw-bold d-block">${n}</strong><span class="faint d-block">${h}</span></div><button class="follow align-self-center">Follow</button></li>`).join(''));
</script>
<script src="https://cdn.jsdelivr.net/npm/bootstrap@5.3.0/dist/js/bootstrap.bundle.min.js"></script>
</body>
</html>
